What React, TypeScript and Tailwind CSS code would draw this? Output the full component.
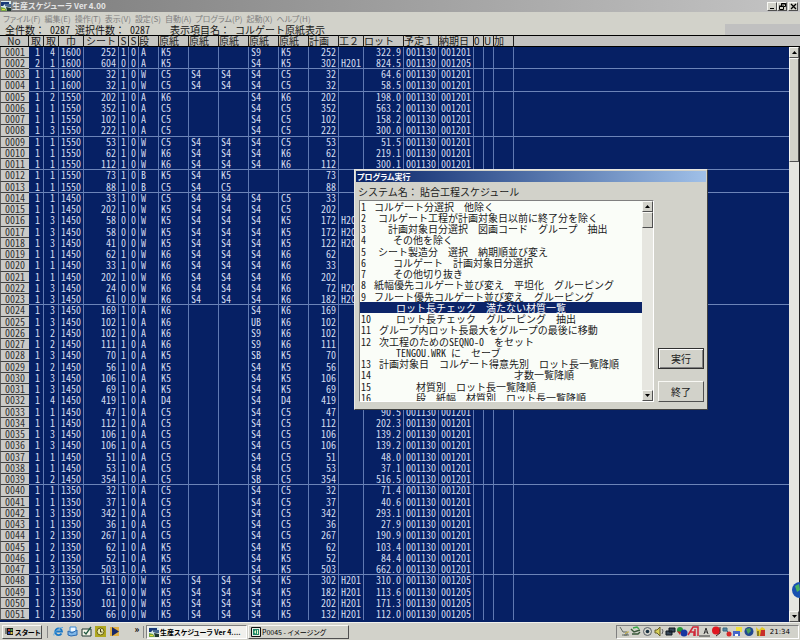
import { useState, type ReactNode } from "react";
import clsx from "clsx";

const menus = [
  "ファイル(F)",
  "編集(E)",
  "操作(T)",
  "表示(V)",
  "設定(S)",
  "自動(A)",
  "プログラム(P)",
  "起動(X)",
  "ヘルプ(H)",
];

const columns = [
  { name: "No", col: "w-[29px]", cell: "" },
  { name: "取", col: "w-[15px]", cell: "text-right pr-[3px]" },
  { name: "取", col: "w-[15px]", cell: "text-right pr-[3px]" },
  { name: "巾", col: "w-[25px]", cell: "text-right pr-0.5" },
  { name: "シート", col: "w-[35px]", cell: "text-right pr-0.5" },
  { name: "S", col: "w-2.5", cell: "text-center" },
  { name: "S", col: "w-2.5", cell: "text-center" },
  { name: "段", col: "w-5", cell: "pl-0.5" },
  { name: "原紙", col: "w-[30px]", cell: "pl-0.5" },
  { name: "原紙", col: "w-[30px]", cell: "pl-0.5" },
  { name: "原紙", col: "w-[30px]", cell: "pl-0.5" },
  { name: "原紙", col: "w-[30px]", cell: "pl-0.5" },
  { name: "原紙", col: "w-[30px]", cell: "pl-0.5" },
  { name: "計画", col: "w-[30px]", cell: "text-right pr-0.5" },
  { name: "工２", col: "w-[25px]", cell: "pl-0.5" },
  { name: "ロット", col: "w-10", cell: "text-right pr-0.5" },
  { name: "予定１", col: "w-[35px]", cell: "pl-0.5" },
  { name: "納期日", col: "w-[35px]", cell: "pl-0.5" },
  { name: "0", col: "w-2.5", cell: "" },
  { name: "U", col: "w-2.5", cell: "" },
  { name: "加", col: "w-5", cell: "" },
];

// "-" is an empty cell
const rows = `
1 4 1600 252 1 0 A K5 - - S9 K5 252 - 322.9 001130 001201
2 1 1600 604 0 0 A K5 - - S4 K5 302 H201 824.5 001130 001205
1 1 1600 32 1 0 W C5 S4 S4 S4 C5 32 - 64.6 001130 001201
1 1 1600 32 1 0 W C5 S4 S4 S4 C5 32 - 58.5 001130 001201
1 2 1550 202 1 0 A K6 - - S4 K6 202 - 198.0 001130 001201
1 1 1550 352 1 0 A C5 - - S4 C5 352 - 563.2 001130 001201
1 1 1550 102 1 0 A C5 - - S4 C5 102 - 158.2 001130 001201
1 3 1550 222 1 0 A C5 - - S4 C5 222 - 300.0 001130 001201
1 1 1550 53 1 0 W C5 S4 S4 S4 C5 53 - 51.5 001130 001201
1 1 1550 62 1 0 W K6 S4 S4 S4 K6 62 - 219.1 001130 001201
1 1 1550 112 1 0 W K6 S4 S4 S4 K6 112 - 300.1 001130 001201
1 1 1550 73 1 0 B K5 S4 K5 - - 73 - - - -
1 1 1550 88 1 0 B C5 S4 C5 - - 88 - - - -
1 1 1450 33 1 0 W C5 S4 S4 S4 C5 33 - - - -
1 1 1450 202 1 0 W K5 S4 S4 S4 C5 202 - - - -
1 3 1450 58 0 0 W K5 S4 S4 S4 K5 172 H201 - - -
1 3 1450 58 0 0 W K5 S4 S4 S4 K5 172 H201 - - -
1 3 1450 41 0 0 W K5 S4 S4 S4 K5 122 H201 - - -
1 1 1450 62 1 0 W K6 S4 S4 S4 K6 62 - - - -
1 1 1450 33 1 0 W K6 S4 S4 S4 K6 33 - - - -
1 1 1450 202 1 0 W K6 S4 S4 S4 K6 202 - - - -
1 3 1450 24 0 0 W K6 S4 S4 S4 K6 72 H201 - - -
1 3 1450 61 0 0 W K6 S4 S4 S4 K6 182 H201 - - -
1 3 1450 169 1 0 A K6 - - S4 K6 169 - - - -
1 3 1450 102 1 0 A K6 - - UB K6 102 - - - -
1 2 1450 102 1 0 A K6 - - S9 K6 102 - - - -
1 2 1450 111 1 0 A K6 - - S9 K6 111 - - - -
1 3 1450 70 1 0 A K5 - - SB K5 70 - - - -
1 2 1450 56 1 0 A K5 - - S4 K5 56 - - - -
1 3 1450 106 1 0 A K5 - - S4 K5 106 - - - -
1 3 1450 69 1 0 A K5 - - S4 K5 69 - - - -
1 4 1450 419 1 0 A D4 - - S4 D4 419 - - - -
1 1 1450 47 1 0 A C5 - - S4 C5 47 - 90.5 001130 001201
1 1 1450 112 1 0 A C5 - - S4 C5 112 - 202.3 001130 001201
1 3 1450 106 1 0 A C5 - - S4 C5 106 - 139.2 001130 001201
1 3 1450 106 1 0 A C5 - - S4 C5 106 - 139.2 001130 001201
1 1 1450 51 1 0 A C5 - - S4 C5 51 - 48.0 001130 001201
1 1 1450 53 1 0 A C5 - - S4 C5 53 - 37.1 001130 001201
1 2 1450 354 1 0 A C5 - - SB C5 354 - 516.5 001130 001201
1 1 1350 32 1 0 A C5 - - S4 C5 32 - 71.4 001130 001201
1 1 1350 37 1 0 A C5 - - S4 C5 37 - 40.6 001130 001201
1 3 1350 342 1 0 A C5 - - S4 C5 342 - 293.1 001130 001201
1 1 1350 36 1 0 A C5 - - S4 C5 36 - 27.9 001130 001201
1 2 1350 267 1 0 A C5 - - S4 C5 267 - 190.9 001130 001201
1 2 1350 62 1 0 A K5 - - S4 K5 62 - 103.4 001130 001201
1 2 1350 52 1 0 A K5 - - S4 K5 52 - 84.4 001130 001201
1 3 1350 503 1 0 A K5 - - S4 K5 503 - 662.0 001130 001201
1 2 1350 151 0 0 W K5 S4 S4 S4 K5 302 H201 310.0 001130 001205
1 3 1350 61 0 0 W K5 S4 S4 S4 K5 182 H201 113.6 001130 001205
1 2 1350 101 0 0 W K5 S4 S4 S4 K5 202 H201 171.3 001130 001205
1 2 1350 66 0 0 W K5 S4 S4 S4 K5 132 H201 112.0 001130 001205`
  .trim()
  .split("\n")
  .map((line) => [...line.split(" "), "-", "-", "-"]);

const groupEnds = [2, 4, 8, 11, 13, 23, 39, 47];

// half-width Latin letters and digits
function Half({ children }: { children: ReactNode }) {
  return <span className="[font-feature-settings:'hwid']">{children}</span>;
}

// indent is the distance of the text from the list's left edge
const programs = [
  { no: "1", indent: 13, text: "コルゲート分選択　他除く" },
  { no: "2", indent: 17, text: "コルゲート工程が計画対象日以前に終了分を除く" },
  { no: "3", indent: 27, text: "計画対象日分選択　図画コード　グループ　抽出" },
  { no: "4", indent: 32, text: "その他を除く" },
  { no: "5", indent: 17, text: "シート製造分　選択　納期順並び変え" },
  { no: "6", indent: 32, text: "コルゲート　計画対象日分選択" },
  { no: "7", indent: 32, text: "その他切り抜き" },
  { no: "8", indent: 13, text: "紙幅優先コルゲート並び変え　平坦化　グルーピング" },
  { no: "9", indent: 13, text: "フルート優先コルゲート並び変え　グルーピング" },
  { no: "", indent: 35, text: "ロット長チェック　満たない材質一覧" },
  { no: "10", indent: 35, text: "ロット長チェック　グルーピング　抽出" },
  { no: "11", indent: 18, text: "グループ内ロット長最大をグループの最後に移動" },
  { no: "12", indent: 18, text: <>次工程のための<Half>SEQNO-0</Half>　をセット</> },
  { no: "", indent: 35, text: <><Half>TENGOU.WRK </Half>に　セーブ</> },
  { no: "13", indent: 18, text: "計画対象日　コルゲート得意先別　ロット長一覧降順" },
  { no: "14", indent: 153, text: "才数一覧降順" },
  { no: "15", indent: 55, text: "材質別　ロット長一覧降順" },
  { no: "16", indent: 55, text: "段　紙幅　材質別　ロット長一覧降順" },
];

const raised =
  "bg-[#d2d2ca] border border-t-[#f8f8f4] border-l-[#f8f8f4] border-r-[#505050] border-b-[#505050]";
const sunken =
  "border border-t-[#808080] border-l-[#808080] border-r-white border-b-white";

function AppIcon() {
  return (
    <svg viewBox="0 0 10 10" className="size-2.5 shrink-0" aria-hidden="true">
      <rect width="10" height="10" fill="#d8e8e8" />
      <path d="M0 1h8v2H4L2 5H0z" fill="#183878" />
      <path d="M4 3h6v3H7L4 5z" fill="#486890" />
      <path d="M0 6l4 1 2 3H0z" fill="#78a840" />
      <path d="M5 6l5 1v3H6z" fill="#203830" />
      <path d="M1 8h3v1H1z" fill="#e8d840" />
    </svg>
  );
}

function Arrow({ down }: { down?: boolean }) {
  return (
    <svg viewBox="0 0 5 3" className="h-[3px] w-[5px]" aria-hidden="true">
      <path d={down ? "M0 0h5L2.5 3z" : "M0 3h5L2.5 0z"} fill="#000" />
    </svg>
  );
}

function ScrollBar({ thumb }: { thumb: string }) {
  const button = clsx(raised, "flex h-[11px] w-full shrink-0 items-center justify-center");
  return (
    <div className="flex h-full w-full flex-col bg-[#e6e6e0]">
      <button className={button} aria-label="上へ">
        <Arrow />
      </button>
      <div className={clsx(raised, "w-full", thumb)} />
      <div className="flex-1" />
      <button className={button} aria-label="下へ">
        <Arrow down />
      </button>
    </div>
  );
}

function TitleBar() {
  return (
    <header className="flex h-3 items-center bg-linear-to-r from-[#7c7c7c] to-[#c4c4c4] pl-px pr-0.5 text-[8px] leading-3 font-bold text-[#e4e4e4]">
      <AppIcon />
      <h1 className="ml-px flex-1 [font-feature-settings:'palt']">生産スケジューラ Ver 4.00</h1>
      <button className={clsx(raised, "flex h-[9px] w-2.5 items-end justify-center pb-px")} aria-label="最小化">
        <span className="h-px w-1 bg-black" />
      </button>
      <button className={clsx(raised, "flex h-[9px] w-2.5 items-center justify-center")} aria-label="元に戻す">
        <svg viewBox="0 0 7 7" className="size-[7px]" fill="none" stroke="#000">
          <path d="M2.5 3V.5h4v3H5M2 1h5M.5 3.5h4v3h-4zM0 3h5" />
        </svg>
      </button>
      <button className={clsx(raised, "ml-px flex h-[9px] w-2.5 items-center justify-center")} aria-label="閉じる">
        <svg viewBox="0 0 7 7" className="size-[7px]" stroke="#000" strokeWidth="1.3">
          <path d="M1 1l5 5M6 1L1 6" />
        </svg>
      </button>
    </header>
  );
}

function Schedule() {
  return (
    <table className="w-full table-fixed border-separate border-spacing-0 text-[10px] leading-[10px] text-[#d4dcf0]">
      <colgroup>
        {columns.map((c, i) => (
          <col key={i} className={c.col} />
        ))}
        <col />
      </colgroup>
      <thead>
        <tr className="text-[#202020]">
          {columns.map((c, i) => (
            <th
              key={i}
              scope="col"
              className={clsx(
                "h-3 border-y border-r border-y-black border-r-[#202020] bg-[#c6c6c2] p-0 font-normal whitespace-nowrap",
                i >= 7 ? "text-left" : "text-center"
              )}
            >
              {c.name}
            </th>
          ))}
          <th className="border-y border-black bg-[#c2c2c0] p-0" />
        </tr>
      </thead>
      <tbody className="[font-feature-settings:'hwid']">
        {rows.map((row, i) => {
          const line = groupEnds.includes(i + 1) && "border-b border-b-[#6c84b8]";
          return (
            <tr key={i} className="h-[11px] nth-[4n]:h-3">
              <th
                scope="row"
                className="border-b border-l border-b-[#404040] border-l-[#606060] bg-[#cacac8] p-0 text-center align-top font-normal text-[#303030]"
              >
                {String(i + 1).padStart(4, "0")}
              </th>
              {row.map((value, j) => (
                <td
                  key={j}
                  className={clsx(
                    "border-r border-r-[#5f79b2] p-0 align-top whitespace-nowrap",
                    columns[j + 1].cell,
                    line
                  )}
                >
                  {value === "-" ? "" : value}
                </td>
              ))}
              <td className={clsx("p-0", line)} />
            </tr>
          );
        })}
      </tbody>
    </table>
  );
}

function ProgramDialog() {
  const [selected, setSelected] = useState(9);

  return (
    <section
      role="dialog"
      aria-labelledby="dialog-title"
      className="absolute top-[169px] left-[354px] w-[354px] border border-t-[#e8e8e4] border-l-[#e8e8e4] border-r-[#404040] border-b-[#404040] bg-[#d2d2ca] p-px text-[10px] text-[#202020]"
    >
      <h2
        id="dialog-title"
        className="h-[11px] bg-linear-to-r from-[#0c2468] to-[#a0c0e8] pl-px text-[8px] leading-[11px] font-bold text-white [font-feature-settings:'palt']"
      >
        プログラム実行
      </h2>
      <p className="mt-1 mb-0.5 pl-0.5 leading-3">システム名： 貼合工程スケジュール</p>
      <div className="flex items-end justify-between pr-0.5 pb-1.5 pl-[3px]">
        <div className={clsx(sunken, "flex h-[202px] w-[295px] bg-[#fafdf8]")}>
          <ul role="listbox" aria-label="プログラム" className="flex-1 overflow-hidden">
            {programs.map((p, i) => (
              <li
                key={i}
                role="option"
                aria-selected={i === selected}
                onClick={() => setSelected(i)}
                className={clsx(
                  "flex h-[11px] leading-[11px] whitespace-pre nth-[4n]:h-3",
                  i === selected && "bg-[#0c2468] text-white"
                )}
              >
                <span className="w-0 pl-px">
                  <Half>{p.no}</Half>
                </span>
                <span style={{ marginLeft: p.indent }}>{p.text}</span>
              </li>
            ))}
          </ul>
          <div className="w-[11px]">
            <ScrollBar thumb="h-4" />
          </div>
        </div>
        <div className="flex flex-col gap-3">
          <button className="h-[21px] w-[46px] border border-[#303030] bg-[#d2d2ca] shadow-[inset_1px_1px_0_#fff,inset_-1px_-1px_0_#808080]">
            実行
          </button>
          <button className={clsx(raised, "h-[21px] w-[46px]")}>終了</button>
        </div>
      </div>
    </section>
  );
}

function QuickLaunch() {
  const icon = "size-[11px]";
  return (
    <div className="flex gap-[3px]">
      <button aria-label="Internet Explorer">
        <svg viewBox="0 0 11 11" className={icon} fill="none">
          <path d="M8.5 7.5A3.4 3.4 0 1 1 9 5.5H3" stroke="#1878c8" strokeWidth="1.8" />
          <path d="M1 9.5C-.5 8 6 1 10 1.5" stroke="#58a8e0" />
        </svg>
      </button>
      <button aria-label="Outlook Express">
        <svg viewBox="0 0 11 11" className={icon}>
          <path d="M3 1h6v5H3z" fill="#f0f8ff" stroke="#3888d0" />
          <path d="M1 5l4 2 5-3v5l-6 1-3-1z" fill="#80b8e8" stroke="#2868b0" />
        </svg>
      </button>
      <button aria-label="デスクトップの表示">
        <svg viewBox="0 0 11 11" className={icon}>
          <path d="M1 3h9v7H1z" fill="#f4f4e8" stroke="#203830" />
          <path d="M3 6l2 2 5-7" fill="none" stroke="#205840" strokeWidth="1.3" />
        </svg>
      </button>
      <button aria-label="Outlook">
        <svg viewBox="0 0 11 11" className={icon}>
          <path d="M0 0h11v11H0z" fill="#b0a820" />
          <circle cx="5.5" cy="5.5" r="3.5" fill="#e8e8b0" stroke="#686010" />
          <path d="M5.5 3v3h2" fill="none" stroke="#403810" />
        </svg>
      </button>
      <button aria-label="Media Player">
        <svg viewBox="0 0 11 11" className={icon}>
          <path d="M1 1h9v9H1z" fill="#e0b048" />
          <path d="M3 1l7 4.5L3 10z" fill="#182868" />
        </svg>
      </button>
    </div>
  );
}

function Tray() {
  return (
    <div className={clsx(sunken, "flex h-[14px] w-[183px] items-center justify-between pl-0.5 pr-2")}>
      <svg viewBox="0 0 147 11" className="h-[11px] w-[147px]" fill="none" aria-hidden="true">
        <path d="M1 1l3 5h4v3H3M5 9h5" stroke="#606860" />
        <path d="M6 8l2-2h2" stroke="#c8b040" />
        <path d="M12 3l3 3 6-2M13 8h6l2-2" stroke="#385838" strokeWidth="1.4" />
        <path d="M14 2l4-1 2 2" stroke="#38a848" strokeWidth="1.4" />
        <circle cx="28.5" cy="5.5" r="4" stroke="#586068" />
        <circle cx="28.5" cy="5.5" r="1.8" fill="#183040" />
        <path d="M36 4h2l3-3v9l-3-3h-2z" fill="#d8d058" stroke="#686028" />
        <path d="M43 3l1 2-1 3" stroke="#606060" />
        <path d="M50 2h6v4h-6zM47 5h6v4h-6z" fill="#384858" stroke="#101820" />
        <circle cx="61" cy="4" r="3" fill="#289838" />
        <circle cx="65" cy="7" r="3.5" fill="#1838a0" />
        <path d="M58 5l4 1-1 3z" fill="#c82828" />
        <path d="M69 9l5-8h5v9M71 6h4v4M76 3v7" stroke="#d02838" strokeWidth="1.5" />
        <path d="M80 10h11" stroke="#383838" />
        <path d="M85 8l2-6 2 6M86 6h2" stroke="#303030" />
        <circle cx="97" cy="4.5" r="4" fill="#e01820" />
        <path d="M101 1v6l-4 3" stroke="#402020" />
        <path d="M104 2h4v3h-4zM108 5l3 3" fill="#5888a8" stroke="#386880" />
        <circle cx="110" cy="8" r="2.5" fill="#d82828" />
        <path d="M117 1h6v5h-6z" fill="#f0e040" />
        <path d="M114 5h7v5h-7z" fill="#4868c8" />
        <path d="M116 8h3v2h-3z" fill="#fff" />
        <circle cx="130" cy="5.5" r="4.5" fill="#204890" />
        <path d="M127 3l4-1 1 3-3 3z" fill="#48a058" />
        <path d="M137 1l3 3 3-3 3 2v7h-8z" fill="#e0c828" />
        <path d="M142 4h4v6h-5z" fill="#c83028" />
        <path d="M139 5v5" stroke="#303020" />
      </svg>
      <time className="font-['DejaVu_Sans'] text-[7px]">21:34</time>
    </div>
  );
}

function TaskBar() {
  return (
    <footer className="flex h-[18px] shrink-0 items-center border-t border-[#f0f0ec] bg-[#d2d2ca] pr-px pl-0.5 text-[7px] leading-3 whitespace-nowrap text-black [font-feature-settings:'palt']">
      <button className={clsx(raised, "flex h-[14px] w-10 items-center gap-px pl-0.5 font-bold")}>
        <svg viewBox="0 0 9 9" className="size-[9px] shrink-0" aria-hidden="true">
          <path d="M0 2h2M0 4h2M0 6h2" stroke="#202020" />
          <path d="M2 1h6v7H2z" fill="#181818" />
          <path d="M3 2h2v2H3z" fill="#c84030" />
          <path d="M5.5 2h2v2h-2z" fill="#50a050" />
          <path d="M3 5h2v2H3z" fill="#3850b8" />
          <path d="M5.5 5h2v2h-2z" fill="#d8c040" />
        </svg>
        スタート
      </button>
      <div className="mx-[5px] h-3 w-px bg-[#888]" />
      <QuickLaunch />
      <button className="ml-[13px] w-2 pb-1 text-[9px] font-bold" aria-label="その他">
        »
      </button>
      <div className="mx-0.5 h-3 w-px bg-[#888]" />
      <button className={clsx(sunken, "flex h-[14px] w-[101px] items-center gap-px bg-[#f0f0ec] pl-0.5 font-bold")}>
        <AppIcon />
        生産スケジューラ Ver 4....
      </button>
      <button className={clsx(raised, "ml-px flex h-[14px] w-[101px] items-center gap-px pl-0.5")}>
        <svg viewBox="0 0 10 10" className="size-2.5 shrink-0" aria-hidden="true">
          <path d="M.5.5h9v9h-9z" fill="#e8f0e8" stroke="#101010" />
          <path d="M2 2h6v6H2z" fill="#208868" />
          <path d="M3 5l2-2v4zM6 3h1v4H6z" fill="#e8f8c8" />
        </svg>
        P0045 - イメージング
      </button>
      <div className="flex-1" />
      <Tray />
    </footer>
  );
}

export default function App() {
  return (
    <div className="relative flex h-screen flex-col overflow-hidden bg-[#d2d2ca] font-['Noto_Sans_CJK_JP',sans-serif]">
      <TitleBar />
      <nav className="flex h-3 gap-1 pl-[3px] text-[8px] leading-[11px] text-[#808080] [font-feature-settings:'palt']">
        {menus.map((m) => (
          <button key={m}>{m}</button>
        ))}
      </nav>
      <div className="flex h-[11px] items-center text-[10px] leading-[11px] whitespace-pre text-[#181818]">
        <p className="w-[165px] pl-[5px]">
          全件数：<Half> 0287 </Half>選択件数：<Half> 0287</Half>
        </p>
        <p className="flex-1 pl-[5px]">
          表示項目名：<Half> </Half>コルゲート原紙表示
        </p>
        <div className="h-full w-[75px] bg-[#c0c0c0]" />
      </div>
      <main className="relative flex-1 bg-[#062064]">
        <Schedule />
        <div className="absolute top-3 right-0 bottom-0 w-[11px] border-r border-[#202020]">
          <ScrollBar thumb="h-[104px]" />
        </div>
        <svg viewBox="0 0 8 16" className="absolute right-0 bottom-6 h-4 w-2" aria-hidden="true">
          <circle cx="8" cy="8" r="8" fill="#1850b0" />
          <path d="M3 4l4-2 1 6-3 2z" fill="#48b060" />
        </svg>
      </main>
      <ProgramDialog />
      <TaskBar />
    </div>
  );
}
